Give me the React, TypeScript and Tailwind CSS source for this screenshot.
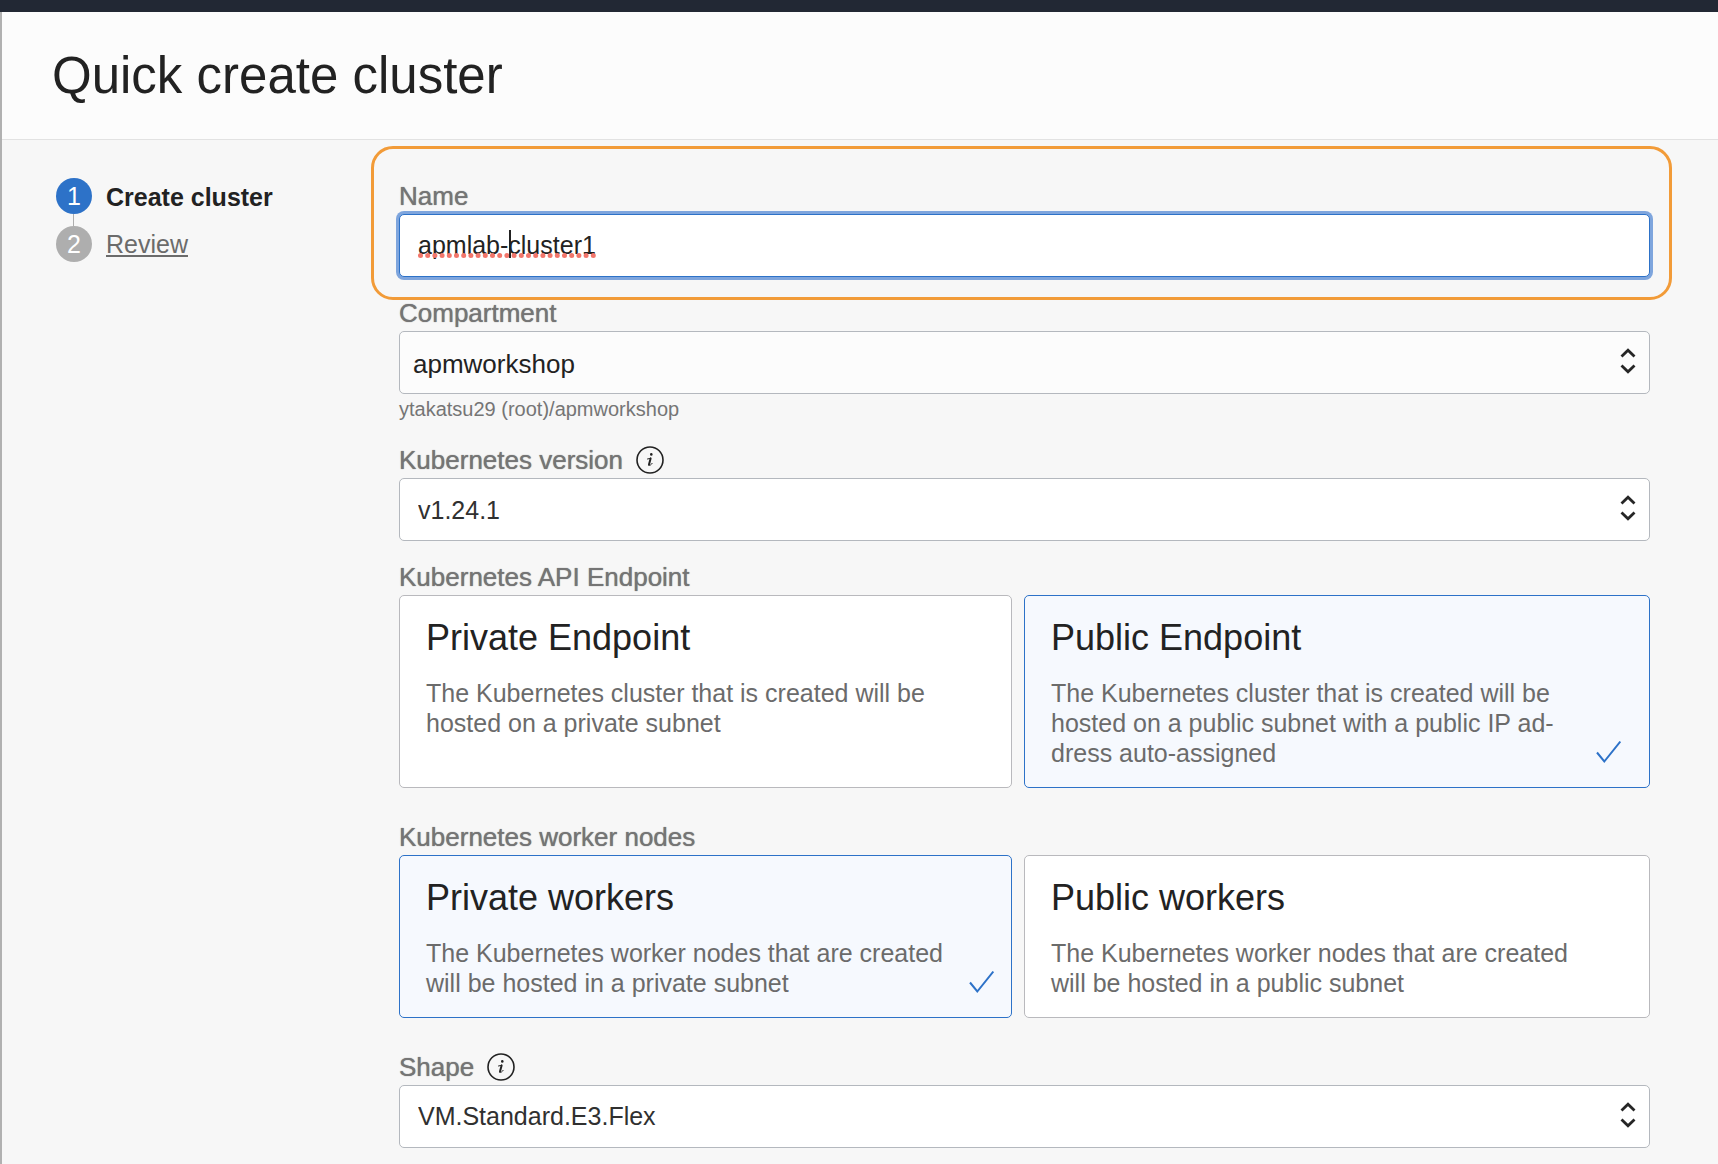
import { useState, type ReactNode } from "react";

function InfoButton({ label }: { label: string }) {
  return (
    <button type="button" aria-label={label} className="shrink-0">
      <svg viewBox="0 0 28 28" className="size-7" fill="none" stroke="#222" strokeLinecap="round" strokeLinejoin="round">
        <circle cx="14" cy="14" r="13" strokeWidth="1.6" />
        <circle cx="15.3" cy="8.4" r="1.3" fill="#222" stroke="none" />
        <path d="M14.6 12.4 13 18.400" strokeWidth="2" />
        <path d="M11.500 13c1.200-.2 2.200-.5 3.200-.9M12.600 19.300c1.400.4 2.600-.5 3.500-1.900" strokeWidth="1" />
      </svg>
    </button>
  );
}

function FieldLabel({ htmlFor, info, children }: { htmlFor: string; info?: string; children: ReactNode }) {
  return (
    <div className="flex items-center gap-[13px]">
      <label htmlFor={htmlFor} className="text-[26px] leading-9 text-[#757575] [text-shadow:0_0_1px_#757575]">
        {children}
      </label>
      {info && <InfoButton label={info} />}
    </div>
  );
}

function SelectField({ id, value, className }: { id: string; value: string; className: string }) {
  return (
    <div className="relative">
      <select
        id={id}
        defaultValue={value}
        className={`block h-[63px] w-full appearance-none rounded-[5px] border border-[#b4b8be] ${className}`}
      >
        <option>{value}</option>
      </select>
      <svg
        viewBox="0 0 16 28"
        className="pointer-events-none absolute top-4 right-3.5 h-7 w-4"
        fill="none"
        stroke="#262626"
        strokeWidth="2.8"
      >
        <path d="M1.500 9.500 8 3.200l6.500 6.300" />
        <path d="M1.500 18.500 8 24.800l6.500-6.300" />
      </svg>
    </div>
  );
}

interface Option {
  value: string;
  title: string;
  text: string;
}

function CardGroup({ name, legend, options, initial }: { name: string; legend: string; options: Option[]; initial: string }) {
  const [selected, setSelected] = useState(initial);
  return (
    <fieldset>
      <legend className="text-[26px] leading-9 text-[#757575] [text-shadow:0_0_1px_#757575]">{legend}</legend>
      <div className="grid grid-cols-[613fr_626fr] gap-3">
        {options.map((o, i) => (
          <label
            key={o.value}
            className={`relative flex cursor-pointer items-end rounded-[5px] border pt-5 pb-[19px] pl-[26px] ${
              i === 0 ? "pr-[17px]" : "pr-7"
            } ${selected === o.value ? "border-[#2d72c8] bg-[#f6f9fe]" : "border-[#b9b9bd] bg-white"}`}
          >
            <input
              type="radio"
              name={name}
              value={o.value}
              checked={selected === o.value}
              onChange={() => setSelected(o.value)}
              className="sr-only"
            />
            <span className="flex-1 self-start">
              <span className="block text-4xl leading-[43px] text-[#222]">{o.title}</span>
              <span className="mt-[19px] block text-[25px] leading-[30px] text-[#6b6b6b]">{o.text}</span>
            </span>
            <svg viewBox="0 0 25 24" className="mb-1 h-6 w-[25px] shrink-0" fill="none" stroke="#2d72c8" strokeWidth="2">
              {selected === o.value && <path d="M1 12.500 8.300 21.500 24.300 1.500" />}
            </svg>
          </label>
        ))}
      </div>
    </fieldset>
  );
}

export default function App() {
  const [name, setName] = useState("apmlab-cluster1");
  return (
    <div className="flex min-h-screen flex-col bg-[#f7f7f7] font-['Liberation_Sans',Arial,sans-serif]">
      <div className="h-3 bg-[#222834]" />
      <div className="flex-1 border-l-2 border-[#b1b1b1]">
        <header className="border-b border-[#e2e2e2] bg-[#fcfcfc] pt-[34px] pr-12 pb-[33px] pl-[50px]">
          <h1 className="text-[51px] leading-[60px] text-[#222]">Quick create cluster</h1>
        </header>

        <div className="flex pt-[38px] pr-[68px] pb-4 pl-[54px]">
          <nav aria-label="Steps" className="w-[343px] shrink-0">
            <ol>
              <li className="flex h-9 items-center gap-3.5 text-[25px] leading-9">
                <span className="flex size-9 items-center justify-center rounded-full bg-[#2d72c8] text-white">1</span>
                <span aria-current="step" className="pt-0.5 font-bold text-[#222]">
                  Create cluster
                </span>
              </li>
              <li aria-hidden="true" className="ml-[17px] h-3 w-px bg-[#aeaeae]" />
              <li className="flex h-9 items-center gap-3.5 text-[25px] leading-9">
                <span className="flex size-9 items-center justify-center rounded-full bg-[#aeaeae] text-white">2</span>
                <a href="#review" className="text-[#6b6b6b] underline decoration-2 underline-offset-2">
                  Review
                </a>
              </li>
            </ol>
          </nav>

          <form className="flex min-w-0 flex-1 flex-col gap-[18px]">
            <div className="relative">
              <FieldLabel htmlFor="name">Name</FieldLabel>
              <div className="relative">
                <input
                  id="name"
                  type="text"
                  value={name}
                  onChange={(e) => setName(e.target.value)}
                  className="block h-[63px] w-full rounded-[5px] border border-[#2d72c8] bg-white px-[18px] text-[25px] text-[#222] ring-[3px] ring-[#7ea5dd] outline-none"
                />
                <svg aria-hidden="true" className="pointer-events-none absolute top-[39px] left-[19px] h-[5px] w-[180px]">
                  <line
                    x1="2.5"
                    y1="2.5"
                    x2="180"
                    y2="2.5"
                    stroke="#f2766b"
                    strokeWidth="5"
                    strokeLinecap="round"
                    strokeDasharray="0 7.2"
                  />
                </svg>
                <span aria-hidden="true" className="pointer-events-none absolute top-4 left-[110px] h-7 w-0.5 bg-[#222]" />
              </div>
              <div
                aria-hidden="true"
                className="pointer-events-none absolute -top-8 -right-[22px] -bottom-[23px] -left-7 rounded-[22px] border-[3px] border-[#f29b38]"
              />
            </div>

            <div>
              <FieldLabel htmlFor="compartment">Compartment</FieldLabel>
              <SelectField
                id="compartment"
                value="apmworkshop"
                className="bg-[#fcfcfc] pt-1 pl-[13px] text-[26px] text-[#222]"
              />
              <p className="text-xl leading-[30px] text-[#757575]">ytakatsu29 (root)/apmworkshop</p>
            </div>

            <div>
              <FieldLabel htmlFor="version" info="About Kubernetes version">
                Kubernetes version
              </FieldLabel>
              <SelectField id="version" value="v1.24.1" className="bg-white pt-0.5 pl-[18px] text-[25px] text-[#303030]" />
            </div>

            <div className="flex flex-col gap-[31px]">
              <CardGroup
                name="endpoint"
                legend="Kubernetes API Endpoint"
                initial="public"
                options={[
                  {
                    value: "private",
                    title: "Private Endpoint",
                    text: "The Kubernetes cluster that is created will be hosted on a private subnet",
                  },
                  {
                    value: "public",
                    title: "Public Endpoint",
                    text: "The Kubernetes cluster that is created will be hosted on a public subnet with a public IP ad\u00address auto-assigned",
                  },
                ]}
              />
              <CardGroup
                name="workers"
                legend="Kubernetes worker nodes"
                initial="private"
                options={[
                  {
                    value: "private",
                    title: "Private workers",
                    text: "The Kubernetes worker nodes that are created will be hosted in a private subnet",
                  },
                  {
                    value: "public",
                    title: "Public workers",
                    text: "The Kubernetes worker nodes that are created will be hosted in a public subnet",
                  },
                ]}
              />
              <div>
                <FieldLabel htmlFor="shape" info="About shape">
                  Shape
                </FieldLabel>
                <SelectField id="shape" value="VM.Standard.E3.Flex" className="bg-white pl-[18px] text-[25px] text-[#303030]" />
              </div>
            </div>
          </form>
        </div>
      </div>
    </div>
  );
}
